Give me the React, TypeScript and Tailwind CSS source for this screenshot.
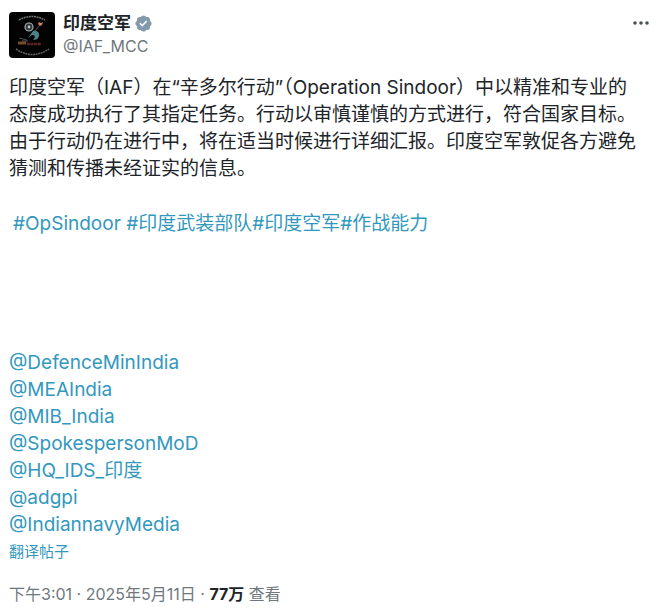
import React from 'react';

const mentions = [
  '@DefenceMinIndia',
  '@MEAIndia',
  '@MIB_India',
  '@SpokespersonMoD',
  '@HQ_IDS_印度',
  '@adgpi',
  '@IndiannavyMedia',
];

function Avatar() {
  return (
    <svg viewBox="0 0 46 46" className="size-[46px] shrink-0 rounded" role="img" aria-label="印度空军">
      <rect width="46" height="46" fill="#030303" />
      <path d="M10 8Q23 1 36 8" fill="none" stroke="#6f7272" strokeWidth="1.6" strokeDasharray="2 .6" />
      <path d="M7 37Q23 48 40 37" fill="none" stroke="#5c5f5f" strokeWidth="1.6" strokeDasharray="2 .6" />
      <circle cx="20" cy="15" r="4" fill="#30383a" stroke="#a5b1b3" strokeWidth="1.2" />
      <circle cx="20" cy="15" r="1.4" fill="#bcc6c7" />
      <path d="M31 13L25 20" stroke="#6b4a3c" strokeWidth="1" />
      <path d="M30 10l2 1 2-1-1 3-2 1-2-2z" fill="#c9805c" />
      <path d="M24 19c4-1 7 2 6 5-1 3-3 4-6 4 3-3 2-5-1-5l-4 3z" fill="#4d8286" />
      <path d="M10 26l8 2M13 29h6" stroke="#43504d" strokeWidth="1.2" />
      <path d="M9 31h8" stroke="#7b4a27" strokeWidth="3" />
      <path d="M18 32h14" stroke="#5f2420" strokeWidth="2.4" strokeDasharray="3 .6" />
    </svg>
  );
}

function VerifiedBadge() {
  return (
    <svg viewBox="0 0 22 22" className="size-[19px]" role="img" aria-label="已认证">
      <path
        fill="#829aab"
        d="M20.396 11c-.018-.646-.215-1.275-.57-1.816-.354-.54-.852-.972-1.438-1.246.223-.607.27-1.264.14-1.897-.131-.634-.437-1.218-.882-1.687-.47-.445-1.053-.75-1.687-.882-.633-.13-1.29-.083-1.897.14-.273-.587-.704-1.086-1.245-1.44S11.647 1.62 11 1.604c-.646.017-1.273.213-1.813.568s-.969.854-1.24 1.44c-.608-.223-1.267-.272-1.902-.14-.635.13-1.22.436-1.69.882-.445.47-.749 1.055-.878 1.688-.13.633-.08 1.29.144 1.896-.587.274-1.087.705-1.443 1.245-.356.54-.555 1.17-.574 1.817.02.647.218 1.276.574 1.817.356.54.856.972 1.443 1.245-.224.606-.274 1.263-.144 1.896.13.634.433 1.218.877 1.688.47.443 1.054.747 1.687.878.633.132 1.29.084 1.897-.136.274.586.705 1.084 1.246 1.439.54.354 1.17.551 1.816.569.647-.016 1.276-.213 1.817-.567s.972-.854 1.245-1.44c.604.239 1.266.296 1.903.164.636-.132 1.22-.447 1.68-.907.46-.46.776-1.044.908-1.681s.075-1.299-.165-1.903c.586-.274 1.084-.705 1.439-1.246.354-.54.551-1.17.569-1.816z"
      />
      <path fill="#fff" d="M9.662 14.85l-3.429-3.428 1.293-1.302 2.072 2.072 4.4-4.794 1.347 1.246z" />
    </svg>
  );
}

export default function App() {
  return (
    <article
      lang="zh-CN"
      className="bg-white pt-3 pr-2 pl-[9px] font-[Inter,'Noto_Sans_CJK_SC',sans-serif] text-[19px] leading-[27px] text-[#202428]"
    >
      <header className="flex items-start gap-2">
        <Avatar />
        <div className="grow">
          <div className="flex items-center gap-[3px]">
            <h1 className="text-[17px] leading-[22px] font-bold">印度空军</h1>
            <VerifiedBadge />
          </div>
          <a href="#profile" className="block text-base leading-6 text-[#70787e]">
            @IAF_MCC
          </a>
        </div>
        <button type="button" aria-label="更多" className="px-2 py-2">
          <svg viewBox="0 0 18 6" className="h-[6px] w-[18px]" fill="#4a5258">
            <circle cx="3" cy="3" r="1.8" />
            <circle cx="9" cy="3" r="1.8" />
            <circle cx="15" cy="3" r="1.8" />
          </svg>
        </button>
      </header>

      <p className="mt-4">
        印度空军（IAF）在“辛多尔行动”（Operation Sindoor）中以精准和专业的
        <br />
        态度成功执行了其指定任务。行动以审慎谨慎的方式进行，符合国家目标。
        <br />
        由于行动仍在进行中，将在适当时候进行详细汇报。印度空军敦促各方避免
        <br />
        猜测和传播未经证实的信息。
      </p>

      <p className="mt-7 pl-1 text-[#3298bd]">
        <a href="#opsindoor">#OpSindoor</a> <a href="#forces">#印度武装部队</a>
        <a href="#airforce">#印度空军</a>
        <a href="#capability">#作战能力</a>
      </p>

      <ul className="mt-28 text-[#3298bd]">
        {mentions.map((name) => (
          <li key={name}>
            <a href="#mention">{name}</a>
          </li>
        ))}
      </ul>
      <button type="button" className="block text-[15px] leading-7 text-[#3298bd]">
        翻译帖子
      </button>

      <footer className="mt-[14px] text-base leading-7 text-[#70787e]">
        下午3:01 · 2025年5月11日 · <strong className="text-[#202428]">77万</strong> 查看
      </footer>
    </article>
  );
}
